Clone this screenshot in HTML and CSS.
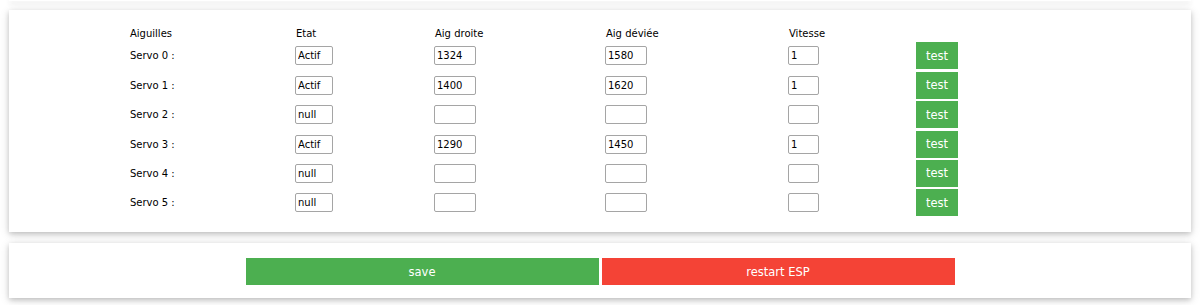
FILE: index.html
```html
<!DOCTYPE HTML>
<html lang="fr">
  <head>
    <title>Aiguilles</title>
    <meta charset="utf-8">
    <link rel="stylesheet" href="styles.css">
  </head>
  <body>

  <div class="card stub"></div>

  <div class="card servos">
    <div class="grid">
      <div class="head">Aiguilles</div>
      <div class="head">Etat</div>
      <div class="head">Aig droite</div>
      <div class="head">Aig déviée</div>
      <div class="head">Vitesse</div>
      <div class="head"></div>

      <div class="label">Servo 0 :</div>
      <div><input class="etat" type="text" value="Actif"></div>
      <div><input class="pos" type="text" value="1324"></div>
      <div><input class="pos" type="text" value="1580"></div>
      <div><input class="speed" type="text" value="1"></div>
      <div><button class="btn green test">test</button></div>

      <div class="label">Servo 1 :</div>
      <div><input class="etat" type="text" value="Actif"></div>
      <div><input class="pos" type="text" value="1400"></div>
      <div><input class="pos" type="text" value="1620"></div>
      <div><input class="speed" type="text" value="1"></div>
      <div><button class="btn green test">test</button></div>

      <div class="label">Servo 2 :</div>
      <div><input class="etat" type="text" value="null"></div>
      <div><input class="pos" type="text" value=""></div>
      <div><input class="pos" type="text" value=""></div>
      <div><input class="speed" type="text" value=""></div>
      <div><button class="btn green test">test</button></div>

      <div class="label">Servo 3 :</div>
      <div><input class="etat" type="text" value="Actif"></div>
      <div><input class="pos" type="text" value="1290"></div>
      <div><input class="pos" type="text" value="1450"></div>
      <div><input class="speed" type="text" value="1"></div>
      <div><button class="btn green test">test</button></div>

      <div class="label">Servo 4 :</div>
      <div><input class="etat" type="text" value="null"></div>
      <div><input class="pos" type="text" value=""></div>
      <div><input class="pos" type="text" value=""></div>
      <div><input class="speed" type="text" value=""></div>
      <div><button class="btn green test">test</button></div>

      <div class="label">Servo 5 :</div>
      <div><input class="etat" type="text" value="null"></div>
      <div><input class="pos" type="text" value=""></div>
      <div><input class="pos" type="text" value=""></div>
      <div><input class="speed" type="text" value=""></div>
      <div><button class="btn green test">test</button></div>
    </div>
  </div>

  <div class="card actions">
    <button class="btn green wide">save</button>
    <button class="btn red wide">restart ESP</button>
  </div>

  </body>
</html>
```

FILE: styles.css
```css
html {
  height: 100%;
}
body {
  margin: 0;
  padding: 0 9px 7px;
  background: #fff;
  color: #000;
  font-family: "DejaVu Sans", Verdana, sans-serif;
  font-size: 10px;
}

.card {
  background: #fff;
  box-shadow: 0 2px 5px 0 rgba(0,0,0,0.18), 0 2px 10px 0 rgba(0,0,0,0.12);
}

.stub {
  height: 1px;
  margin-bottom: 9px;
}

.servos {
  margin-bottom: 11px;
  padding: 17px 0 16px 121px;
}

.grid {
  display: grid;
  grid-template-columns: 165px 139px 171px 183px 128px 42px;
  row-gap: 2.4px;
  align-items: center;
}

.head {
  height: 13px;
  line-height: 13px;
  padding-left: 1px;
}
.head:first-child {
  padding-left: 0;
}

.label {
  line-height: 13px;
}

input {
  display: block;
  box-sizing: border-box;
  height: 19px;
  margin: 0;
  padding: 0 2px;
  border: 1px solid #a5a5a5;
  border-radius: 2px;
  font-family: "DejaVu Sans", Verdana, sans-serif;
  font-size: 10px;
  color: #000;
  background: #fff;
}
input.etat {
  width: 38px;
}
input.pos {
  width: 42px;
}
input.speed {
  width: 31px;
}

.btn {
  display: block;
  height: 27px;
  margin: 0;
  padding: 0;
  border: none;
  color: #fff;
  font-family: "DejaVu Sans", Verdana, sans-serif;
  font-size: 11.5px;
  cursor: pointer;
}
.green {
  background: #4caf50;
}
.red {
  background: #f44336;
}
.test {
  width: 42px;
}

.actions {
  display: flex;
  justify-content: center;
  gap: 3px;
  padding: 15px 0 13px;
}
.wide {
  width: 353px;
}
```
